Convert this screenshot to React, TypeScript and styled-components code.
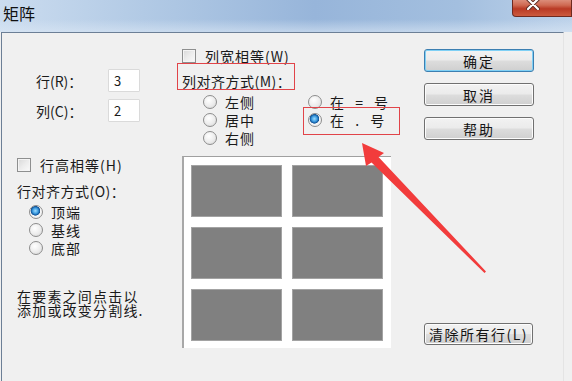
import React from "react";
import styled, { createGlobalStyle } from "styled-components";

const GlobalStyle = createGlobalStyle`
  html, body { margin: 0; padding: 0; }
  body {
    width: 572px;
    height: 381px;
    overflow: hidden;
    background: #f0f0f0;
    font-family: "Noto Sans CJK SC", "Liberation Sans", sans-serif;
    font-size: 14px;
    color: #1a1a1a;
  }
`;

const Window = styled.div`
  position: relative;
  width: 572px;
  height: 381px;
  display: flex;
  flex-direction: column;
  background: #f0f0f0;
`;

const TitleBar = styled.div`
  height: 32px;
  flex: none;
  display: flex;
  justify-content: space-between;
  align-items: flex-start;
  background:
    linear-gradient(180deg, rgba(255,255,255,0) 60%, rgba(220,232,245,0.6) 100%),
    linear-gradient(90deg, #cbdcef 0%, #b2cae5 25%, #97b5da 55%, #a3bfdf 80%, #bdd2ea 100%);
`;

const Title = styled.div`
  padding: 3px 0 0 3px;
  font-size: 16px;
  line-height: 20px;
  color: #101010;
`;

const CloseButton = styled.div`
  width: 60px;
  height: 19px;
  margin-top: -2px;
  box-sizing: border-box;
  border: 1px solid #6e2a20;
  border-top: none;
  border-radius: 0 0 0 4px;
  display: flex;
  justify-content: center;
  padding: 1px 18px 0 0;
  background: linear-gradient(180deg, #e09a88 0%, #cf6a52 40%, #b93a24 60%, #cc5a3e 100%);
`;

const Body = styled.div`
  flex: 1;
  margin-left: 1px;
  border-top: 1px solid #6c7f96;
  border-left: 1px solid #6c7f96;
  border-right: 1px solid #e4e4e4;
  margin-right: 8px;
  display: grid;
  grid-template-columns: 180px 228px 1fr;
`;

const LeftColumn = styled.div`
  display: flex;
  flex-direction: column;
  padding: 36px 0 0 15px;
`;

const FieldRow = styled.div<{ gap?: number }>`
  display: flex;
  align-items: center;
  height: 23px;
  padding-left: 19px;
  margin-top: ${(p) => p.gap ?? 0}px;
`;

const FieldLabel = styled.span`
  width: 72px;
`;

const NumberBox = styled.div`
  width: 32px;
  height: 23px;
  box-sizing: border-box;
  border: 1px solid #dadada;
  border-radius: 1px;
  background: #fff;
  padding-left: 5px;
  font-size: 13px;
  line-height: 21px;
`;

const CheckRow = styled.div<{ gap?: number }>`
  display: flex;
  align-items: center;
  gap: 9px;
  height: 16px;
  line-height: 16px;
  margin-top: ${(p) => p.gap ?? 0}px;
  letter-spacing: 1px;
`;

const CheckBox = styled.span`
  width: 14px;
  height: 14px;
  box-sizing: border-box;
  border: 1px solid #8e8f8f;
  background: linear-gradient(135deg, #d8d8d8 0%, #ececec 50%, #fafafa 100%);
  box-shadow: inset 0 0 0 1px #f4f4f4;
`;

const SectionLabel = styled.div<{ gap?: number }>`
  margin-top: ${(p) => p.gap ?? 0}px;
  line-height: 16px;
  letter-spacing: 0.5px;
`;

const RadioList = styled.div<{ indent: number }>`
  display: flex;
  flex-direction: column;
  padding-left: ${(p) => p.indent}px;
`;

const RadioRow = styled.div`
  position: relative;
  display: flex;
  align-items: center;
  gap: 8px;
  height: 18px;
  line-height: 18px;
  letter-spacing: 1px;
`;

const RadioDot = styled.span<{ checked?: boolean }>`
  width: 14px;
  height: 14px;
  box-sizing: border-box;
  border-radius: 50%;
  border: 1px solid #8d8d8d;
  background: ${(p) =>
    p.checked
      ? "radial-gradient(circle at 45% 40%, #9fdcff 0%, #3d9ce0 28%, #0d4f95 46%, #f6f6f6 52%, #e6e6e6 100%)"
      : "radial-gradient(circle at 40% 35%, #ffffff 0%, #ececec 55%, #d2d2d2 100%)"};
`;

const Flagged = styled(RadioRow)`
  width: 82px;
  &::after {
    content: "";
    position: absolute;
    top: -4px;
    bottom: -6px;
    left: -5px;
    right: -10px;
    border: 1px solid #e14449;
  }
`;

const SignText = styled.span`
  word-spacing: 6px;
`;

const HelpText = styled.div`
  margin-top: 32px;
  line-height: 14px;
  letter-spacing: 1.2px;
`;

const MiddleColumn = styled.div`
  display: flex;
  flex-direction: column;
  padding-top: 15px;
`;

const BoxedLabel = styled.div`
  align-self: flex-start;
  margin: -1px 0 0 -5px;
  padding: 9px 3px 0 4px;
  border: 1px solid #e14449;
  line-height: 16px;
  letter-spacing: 0.5px;
`;

const AlignColumns = styled.div`
  display: flex;
  margin-top: 3px;
`;

const Preview = styled.div`
  width: 209px;
  height: 192px;
  margin-top: 9px;
  box-sizing: border-box;
  background: #fff;
  border-top: 1px solid #a0a0a0;
  border-left: 2px solid #a8a8a8;
  padding: 8px 0 0 7px;
  display: grid;
  grid-template-columns: 91px 91px;
  grid-template-rows: 52px 52px 52px;
  gap: 10px;
`;

const Cell = styled.div`
  background: #808080;
  border: 1px solid #a3a3a3;
`;

const RightColumn = styled.div`
  display: flex;
  flex-direction: column;
  padding: 16px 0 0 14px;
`;

const Button = styled.div<{ focused?: boolean; gap?: number; wide?: number }>`
  width: ${(p) => p.wide ?? 110}px;
  height: ${(p) => (p.wide ? 22 : 23)}px;
  margin-top: ${(p) => p.gap ?? 0}px;
  box-sizing: border-box;
  border: 1px solid ${(p) => (p.focused ? "#3c7fb1" : "#707070")};
  border-radius: 3px;
  background: linear-gradient(180deg, #f2f2f2 0%, #ebebeb 48%, #dddddd 52%, #cfcfcf 100%);
  box-shadow: ${(p) => (p.focused ? "inset 0 0 0 1px #7fd0f5" : "inset 0 0 0 1px #fcfcfc")};
  display: flex;
  align-items: center;
  justify-content: center;
  font-size: 14px;
  letter-spacing: ${(p) => (p.wide ? 1.5 : 2)}px;
  color: #151515;
`;

const Overlay = styled.svg`
  position: absolute;
  left: 0;
  top: 0;
  width: 572px;
  height: 381px;
  pointer-events: none;
`;

const Radio = ({ checked, children }: { checked?: boolean; children: React.ReactNode }) => (
  <RadioRow>
    <RadioDot checked={checked} />
    <span>{children}</span>
  </RadioRow>
);

export default function App() {
  const cells = [0, 1, 2, 3, 4, 5];
  return (
    <>
      <GlobalStyle />
      <Window>
        <TitleBar>
          <Title>矩阵</Title>
          <CloseButton>
            <svg width="14" height="11" viewBox="0 0 14 11">
              <path d="M2 0 L12 10 M12 0 L2 10" stroke="#5a2a22" strokeWidth="4" strokeLinecap="round" />
              <path d="M2 0 L12 10 M12 0 L2 10" stroke="#ffffff" strokeWidth="2.2" strokeLinecap="round" />
            </svg>
          </CloseButton>
        </TitleBar>
        <Body>
          <LeftColumn>
            <FieldRow>
              <FieldLabel>行(R)：</FieldLabel>
              <NumberBox>3</NumberBox>
            </FieldRow>
            <FieldRow gap={7}>
              <FieldLabel>列(C)：</FieldLabel>
              <NumberBox>2</NumberBox>
            </FieldRow>
            <CheckRow gap={35}>
              <CheckBox />
              <span>行高相等(H)</span>
            </CheckRow>
            <SectionLabel gap={10}>行对齐方式(O)：</SectionLabel>
            <RadioList indent={12} style={{ marginTop: 4 }}>
              <Radio checked>顶端</Radio>
              <Radio>基线</Radio>
              <Radio>底部</Radio>
            </RadioList>
            <HelpText>
              在要素之间点击以
              <br />
              添加或改变分割线.
            </HelpText>
          </LeftColumn>

          <MiddleColumn>
            <CheckRow>
              <CheckBox />
              <span>列宽相等(W)</span>
            </CheckRow>
            <BoxedLabel>列对齐方式(M)：</BoxedLabel>
            <AlignColumns>
              <RadioList indent={21} style={{ width: 105 }}>
                <Radio>左侧</Radio>
                <Radio>居中</Radio>
                <Radio>右侧</Radio>
              </RadioList>
              <RadioList indent={0}>
                <RadioRow>
                  <RadioDot />
                  <SignText>在 = 号</SignText>
                </RadioRow>
                <Flagged>
                  <RadioDot checked />
                  <SignText>在 . 号</SignText>
                </Flagged>
              </RadioList>
            </AlignColumns>
            <Preview>
              {cells.map((c) => (
                <Cell key={c} />
              ))}
            </Preview>
          </MiddleColumn>

          <RightColumn>
            <Button focused>确定</Button>
            <Button gap={11}>取消</Button>
            <Button gap={11}>帮助</Button>
            <Button gap={183} wide={109}>清除所有行(L)</Button>
          </RightColumn>
        </Body>

        <Overlay viewBox="0 0 572 381">
          <polygon
            points="362,143 384,153 378.5,157 486,271.5 484.5,273 371.5,162.5 366,166"
            fill="#f23c3c"
          />
        </Overlay>
      </Window>
    </>
  );
}
